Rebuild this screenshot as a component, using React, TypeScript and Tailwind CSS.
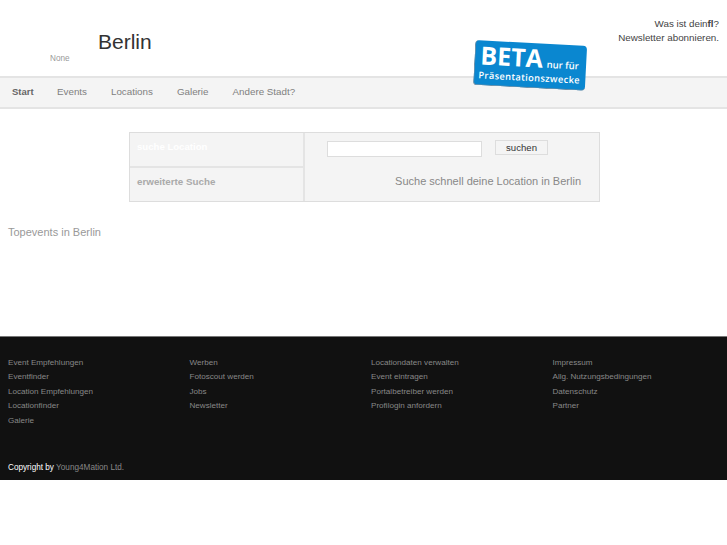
import React from 'react';

const columns = [
  ['Event Empfehlungen', 'Eventfinder', 'Location Empfehlungen', 'Locationfinder', 'Galerie'],
  ['Werben', 'Fotoscout werden', 'Jobs', 'Newsletter'],
  ['Locationdaten verwalten', 'Event eintragen', 'Portalbetreiber werden', 'Profilogin anfordern'],
  ['Impressum', 'Allg. Nutzungsbedingungen', 'Datenschutz', 'Partner'],
];

const nav = ['Events', 'Locations', 'Galerie', 'Andere Stadt?'];

export default function App() {
  return (
    <div className="w-[727px] h-[545px] overflow-hidden bg-white font-['Liberation_Sans',Arial,sans-serif]">
      {/* Header */}
      <header className="relative h-[76px] flex justify-between">
        <div className="flex items-start pl-[50px]">
          <span className="mt-[53px] w-[48px] text-[8.2px] leading-[11px] text-[#999]">None</span>
          <h1 className="mt-[29px] text-[21px] leading-[26px] font-normal text-[#333]">Berlin</h1>
        </div>
        <div className="pt-[17px] pr-[8px] text-right text-[9.8px] leading-[14px] text-[#444]">
          <div>Was ist dein<b>fl</b>?</div>
          <div>Newsletter abonnieren.</div>
        </div>
        {/* Beta badge */}
        <div className="absolute z-10 left-[474px] top-[43px] w-[112px] h-[45px] rotate-[3deg] rounded-[4px] bg-[#0a87d0] border-b border-l border-[#6b8fa8] text-white font-['Open_Sans',sans-serif]">
          <div className="flex items-baseline pl-[5px] pt-[1px]">
            <span className="text-[25px] leading-[27px] font-bold">BETA</span>
            <span className="ml-[4px] text-[9.5px] leading-[12px] font-semibold whitespace-nowrap">nur für</span>
          </div>
          <div className="pl-[4px] text-[9.3px] leading-[13px] font-semibold tracking-[0.35px] whitespace-nowrap">Präsentationszwecke</div>
        </div>
      </header>

      {/* Nav */}
      <nav className="h-[33px] flex items-center gap-[24px] pl-[12px] bg-[#f4f4f4] border-y-2 border-[#e4e4e4] text-[9.8px] text-[#808080]">
        <a className="w-[21px] text-[9.5px] font-bold text-[#666] whitespace-nowrap">Start</a>
        {nav.map((item) => (
          <a key={item}>{item}</a>
        ))}
      </nav>

      {/* Search */}
      <section className="mt-[23px] ml-[129px] w-[471px] h-[70px] flex bg-[#f4f4f4] border border-[#ddd]">
        <div className="w-[175px] shrink-0 flex flex-col border-r-2 border-[#e4e4e4]">
          <div className="h-[35px] pl-[7px] pt-[7px] border-b-2 border-[#e4e4e4] text-[9.6px] leading-[13px] font-bold text-white">suche Location</div>
          <div className="pl-[7px] pt-[7px] text-[9.8px] leading-[13px] font-bold text-[#aaa]">erweiterte Suche</div>
        </div>
        <div className="flex-1 flex flex-col">
          <div className="flex items-start pl-[22px] pt-[7px]">
            <input className="w-[155px] h-[16px] mt-[1px] bg-white border border-[#ddd]" />
            <button className="ml-[13px] w-[53px] h-[15px] bg-[#f4f4f4] border border-[#ddd] text-[9.6px] leading-[13px] text-[#333]">suchen</button>
          </div>
          <p className="mt-[16px] pr-[18px] text-right text-[11px] leading-[16px] text-[#888]">Suche schnell deine Location in Berlin</p>
        </div>
      </section>

      <h2 className="mt-[23px] pl-[8px] text-[11px] leading-[14px] font-normal text-[#999]">Topevents in Berlin</h2>

      {/* Footer */}
      <footer className="mt-[97px] h-[144px] bg-[#111] border-t border-[#777] pt-[19px] text-[8.1px] text-[#888]">
        <div className="h-[105px] grid grid-cols-[181.5px_181.5px_181.5px_1fr]">
          {columns.map((col, i) => (
            <ul key={i} className="pl-[8px]">
              {col.map((link) => (
                <li key={link} className="h-[14.4px] leading-[14.4px] whitespace-nowrap">{link}</li>
              ))}
            </ul>
          ))}
        </div>
        <div className="pl-[8px] pt-[1px] leading-[12px] text-[8.2px]">
          <span className="text-white">Copyright by</span> Young4Mation Ltd.
        </div>
      </footer>
    </div>
  );
}
